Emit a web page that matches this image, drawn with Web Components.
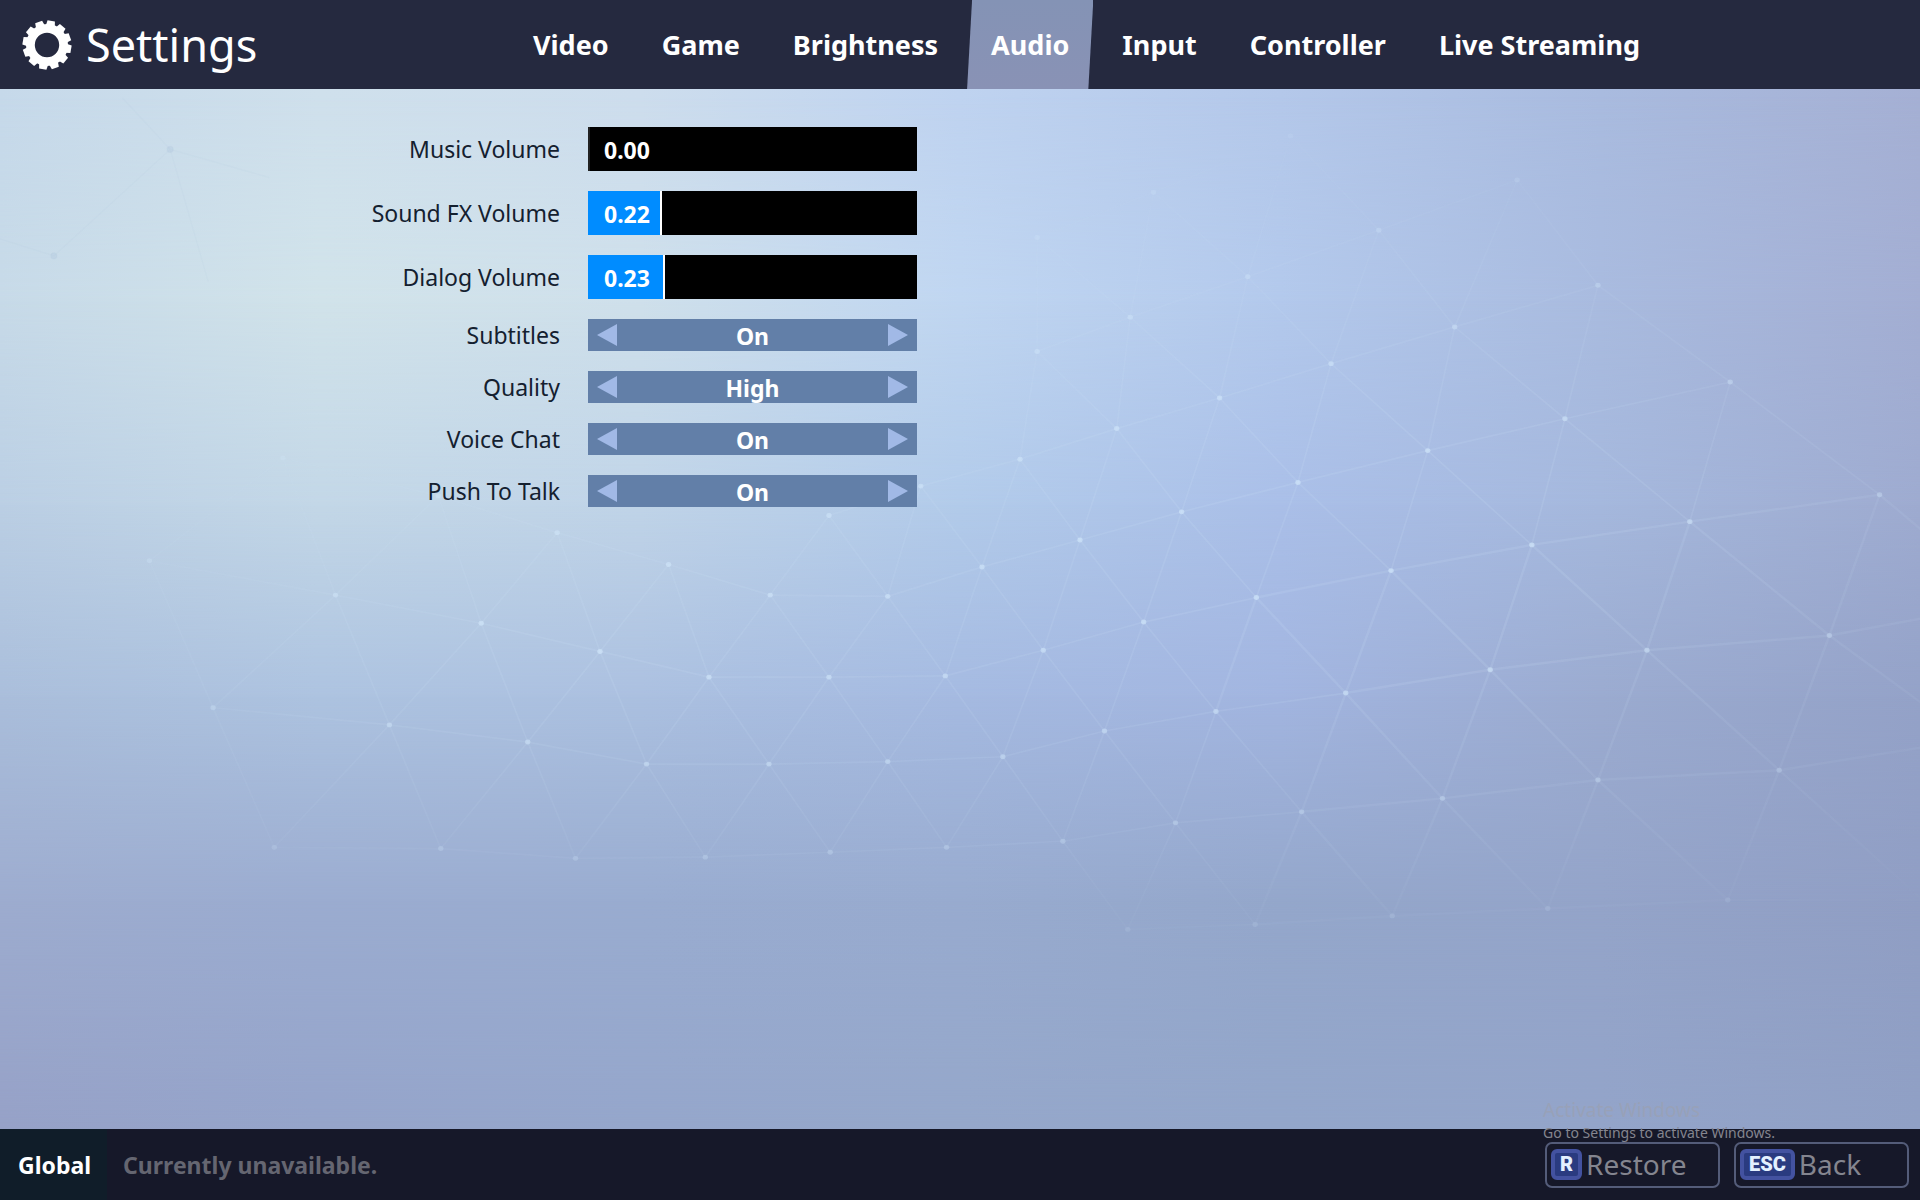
<!DOCTYPE html>
<html lang="en">
<head>
<meta charset="utf-8">
<title>Settings</title>
<style>
    html, body {
        height: 100%;
        margin: 0;
    }

    body {
        font-family: "Noto Sans", "Open Sans", sans-serif;
        color: #fff;
    }
</style>
</head>
<body>

<settings-screen>
    <settings-header slot="header" heading="Settings">
        <settings-tab>Video</settings-tab>
        <settings-tab>Game</settings-tab>
        <settings-tab>Brightness</settings-tab>
        <settings-tab active>Audio</settings-tab>
        <settings-tab>Input</settings-tab>
        <settings-tab>Controller</settings-tab>
        <settings-tab>Live Streaming</settings-tab>
    </settings-header>

    <settings-panel>
        <volume-setting value="0.00">Music Volume</volume-setting>
        <volume-setting value="0.22">Sound FX Volume</volume-setting>
        <volume-setting value="0.23">Dialog Volume</volume-setting>
        <choice-setting options="On,Off" value="On">Subtitles</choice-setting>
        <choice-setting options="Low,High" value="High">Quality</choice-setting>
        <choice-setting options="On,Off" value="On">Voice Chat</choice-setting>
        <choice-setting options="On,Off" value="On">Push To Talk</choice-setting>
    </settings-panel>

    <settings-footer slot="footer">
        <span slot="channel">Global</span>
        <span slot="status">Currently unavailable.</span>
        <key-button key="R">Restore</key-button>
        <key-button key="ESC">Back</key-button>
    </settings-footer>

    <activation-notice slot="notice">
        <span slot="title">Activate Windows</span>
        Go to Settings to activate Windows.
    </activation-notice>
</settings-screen>

<script>
class BaseElement extends HTMLElement {
    constructor(html) {
        super();
        this.attachShadow({ mode: 'open' }).innerHTML = html;
    }

    $(selector) {
        return this.shadowRoot.querySelector(selector);
    }
}


customElements.define('settings-screen', class SettingsScreen extends BaseElement {
    constructor() {
        super(`
<style>
    :host {
        position: relative;
        display: grid;
        grid-template-rows: auto 1fr auto;
        min-height: 100vh;
        isolation: isolate;
    }

    mesh-backdrop {
        position: absolute;
        inset: 0;
        z-index: -1;
    }
</style>
<mesh-backdrop></mesh-backdrop>
<slot name="header"></slot>
<slot></slot>
<slot name="footer"></slot>
<slot name="notice"></slot>
`);
    }
});


// colours from left to right, one line for each stop going down
const shades = [
    [8,   '#c6d9ea', '#cfe0ec', '#cddded', '#bfd3f0', '#b4c8ea', '#a9bbdf', '#a5b0d4'],
    [25,  '#c7dae8', '#d1e3ea', '#cfe0eb', '#c0d6f1', '#b3c9ec', '#a9bbdf', '#a3aed3'],
    [42,  '#bbcfe4', '#c3d7e7', '#c0d4e8', '#b2cbea', '#aabfe8', '#a5b8dd', '#9eabd0'],
    [58,  '#aabedb', '#adc3e0', '#abc0e0', '#a5bae1', '#a2b5e0', '#9babd0', '#94a2c8'],
    [75,  '#9daccf', '#9bacd0', '#99acd0', '#98abcf', '#94a7cb', '#94a4c9', '#909ec4'],
    [94,  '#96a1c7', '#95a4ca', '#95a6cb', '#95a7ca', '#93a6ca', '#93a4c9', '#90a0c5'],
];

// rows of mesh points on a 1568 x 980 canvas
const mesh = [
    { start: 6, lean: 0, points: [[847, 194], [942, 157], [1054, 111]] },
    { start: 6, lean: 0, points: [[847, 287], [923, 259], [1019, 226], [1126, 188], [1239, 147]] },
    { start: 4, lean: 0, points: [[677, 421], [752, 397], [833, 375], [912, 350], [996, 325], [1087, 297], [1188, 267], [1305, 233]] },
    { start: 0, lean: 0, points: [[231, 374], [358, 405], [455, 435], [546, 461], [629, 486], [725, 487], [802, 463], [882, 441], [965, 418], [1060, 394], [1166, 368], [1278, 342], [1413, 312]] },
    { start: 0, lean: -1, points: [[122, 458], [274, 486], [393, 509], [490, 532], [579, 553], [677, 553], [772, 552], [852, 531], [934, 508], [1026, 488], [1136, 466], [1251, 445], [1380, 426], [1535, 404]] },
    { start: 0, lean: -1, points: [[174, 578], [318, 592], [431, 606], [528, 624], [628, 624], [725, 622], [819, 618], [902, 597], [993, 581], [1099, 566], [1217, 547], [1345, 531], [1494, 519], [1640, 492]] },
    { start: 0, lean: -1, points: [[224, 692], [360, 693], [470, 701], [576, 700], [678, 696], [773, 692], [868, 687], [960, 672], [1063, 663], [1178, 652], [1305, 637], [1453, 629], [1610, 604]] },
    { start: 6, lean: 0, points: [[921, 759], [1025, 755], [1137, 748], [1264, 742], [1411, 735], [1570, 735]] },
];

function meshMarkup() {
    let lines = '';
    let dots = '';
    const at = (row, column) => row && row.points[column - row.start];
    const line = (from, to, width) => {
        if(from && to) {
            lines += `<path d="M${from} L${to}" stroke-width="${width}"/>`;
        }
    };

    mesh.forEach((row, r) => {
        row.points.forEach((point, i) => {
            let column = row.start + i;
            let width = r > 3 && point[0] > 1000 ? 2 : 1.4;
            dots += `<ellipse cx="${point[0]}" cy="${point[1]}" rx="2.2" ry="2"/>`;
            line(point, row.points[i + 1], width);
            line(point, at(mesh[r + 1], column + row.lean), width);
            line(point, at(mesh[r + 1], column + row.lean + 1), width);
        });
    });
    return `<g class="lines">${lines}</g><g class="dots">${dots}</g>`;
}

customElements.define('mesh-backdrop', class MeshBackdrop extends BaseElement {
    constructor() {
        super(`
<style>
    :host {
        display: block;
        overflow: hidden;
    }

    .shade, svg {
        position: absolute;
        inset: 0;
        width: 100%;
        height: 100%;
    }

    .mesh {
        -webkit-mask-image: radial-gradient(ellipse 52% 40% at 70% 45%, #000 25%, transparent 100%),
            radial-gradient(ellipse 40% 28% at 30% 54%, #000 10%, transparent 100%);
        mask-image: radial-gradient(ellipse 52% 40% at 70% 45%, #000 25%, transparent 100%),
            radial-gradient(ellipse 40% 28% at 30% 54%, #000 10%, transparent 100%);
    }

    .lines {
        fill: none;
        stroke: #cfe4f8;
        stroke-opacity: 0.15;
    }

    .dots {
        fill: #d3e9fb;
        fill-opacity: 0.6;
    }

    .dim {
        fill: #a9c0da;
        fill-opacity: 0.25;
        stroke: #a9c0da;
        stroke-opacity: 0.08;
    }
</style>
${shades.map(([top, ...colours], i) => {
    // every layer fades in over the one before it
    let mask = i ? `linear-gradient(transparent ${shades[i - 1][0]}%, #000 ${top}%)` : 'none';
    return `<div class="shade" style="background: linear-gradient(90deg, ${colours.join(', ')}); -webkit-mask-image: ${mask}; mask-image: ${mask}"></div>`;
}).join('')}
<svg viewBox="0 0 1568 980" preserveAspectRatio="none" aria-hidden="true">
    <g class="dim">
        <circle cx="139" cy="122" r="2.5"/>
        <circle cx="44" cy="209" r="2.5"/>
        <path d="M139 122 L44 209 L0 195 M139 122 L170 230 M139 122 L100 80 M139 122 L220 145"  fill="none"/>
    </g>
</svg>
<svg class="mesh" viewBox="0 0 1568 980" preserveAspectRatio="none" aria-hidden="true">${meshMarkup()}</svg>
`);
    }
});


customElements.define('gear-icon', class GearIcon extends BaseElement {
    constructor() {
        let teeth = '';
        for(let i = 0; i < 12; i++) {
            teeth += `<path d="M-4.6 -19 L-3.7 -24.4 H3.7 L4.6 -19 Z" transform="rotate(${i * 30 + 10})"/>`;
        }
        super(`
<style>
    :host {
        display: block;
        width: 50px;
        height: 50px;
    }

    svg {
        display: block;
        fill: currentColor;
    }
</style>
<svg viewBox="-25 -25 50 50" aria-hidden="true">
    <circle r="16.6" fill="none" stroke="currentColor" stroke-width="8.8"/>
    ${teeth}
</svg>
`);
    }
});


customElements.define('settings-header', class SettingsHeader extends BaseElement {
    constructor() {
        super(`
<style>
    :host {
        display: block;
        background: #25293f;
    }

    header {
        display: flex;
        height: 89px;
    }

    .brand {
        display: flex;
        flex: none;
        align-items: center;
        gap: 14px;
        box-sizing: border-box;
        width: calc(25% + 29px);
        padding-left: 22px;
    }

    h1 {
        margin: 0;
        font-size: 45px;
        font-weight: 400;
        line-height: 60px;
    }

    nav {
        display: flex;
        gap: 5px;
    }
</style>
<header>
    <div class="brand"><gear-icon></gear-icon><h1></h1></div>
    <nav><slot></slot></nav>
</header>
`);
    }

    connectedCallback() {
        this.$('h1').textContent = this.getAttribute('heading');
    }
});


customElements.define('settings-tab', class SettingsTab extends BaseElement {
    constructor() {
        super(`
<style>
    :host {
        display: flex;
    }

    a {
        display: flex;
        align-items: center;
        padding: 0 24px;
        color: #fff;
        font-size: 27px;
        font-weight: 700;
        line-height: 36px;
        text-decoration: none;
        white-space: nowrap;
    }

    :host([active]) a {
        background: linear-gradient(#8493b5, #8992b5);
        clip-path: polygon(5px 0, 100% 0, calc(100% - 5px) 100%, 0 100%);
    }
</style>
<a href="#"><slot></slot></a>
`);
    }

    connectedCallback() {
        if(this.hasAttribute('active')) {
            this.$('a').setAttribute('aria-current', 'page');
        }
    }
});


customElements.define('settings-panel', class SettingsPanel extends BaseElement {
    constructor() {
        super(`
<style>
    :host {
        display: block;
    }

    main {
        display: flex;
        flex-direction: column;
        gap: 20px;
        box-sizing: border-box;
        width: calc(50% - 43px);
        padding: 38px 0;
    }
</style>
<main><slot></slot></main>
`);
    }
});


const rowStyle = `
    :host {
        display: grid;
        grid-template-columns: 1fr 329px;
        column-gap: 28px;
        align-items: center;
        font-size: 23px;
        line-height: 32px;
    }

    label {
        color: #14202f;
        text-align: right;
    }

    output {
        font-weight: 700;
    }
`;

customElements.define('volume-setting', class VolumeSetting extends BaseElement {
    constructor() {
        super(`
<style>
    ${rowStyle}

    .bar {
        display: grid;
        align-items: center;
        height: 44px;
    }

    input, output {
        grid-area: 1 / 1;
    }

    input {
        -webkit-appearance: none;
        appearance: none;
        width: 100%;
        height: 100%;
        margin: 0;
        background: linear-gradient(90deg, #008cff var(--level), #000 var(--level));
    }

    input::-webkit-slider-thumb {
        -webkit-appearance: none;
        width: 2px;
        height: 44px;
        background: var(--thumb);
    }

    output {
        z-index: 1;
        padding: 2px 0 0 16px;
        pointer-events: none;
    }
</style>
<label for="level"><slot></slot></label>
<div class="bar">
    <input id="level" type="range" min="0" max="1" step="0.01">
    <output for="level"></output>
</div>
`);
    }

    connectedCallback() {
        let input = this.$('input');
        input.value = this.getAttribute('value');
        input.addEventListener('input', () => this.update());
        this.update();
    }

    update() {
        let value = Number(this.$('input').value);
        this.$('output').textContent = value.toFixed(2);
        this.style.setProperty('--level', (value * 100) + '%');
        this.style.setProperty('--thumb', value ? '#fff' : '#222');
    }
});


customElements.define('choice-setting', class ChoiceSetting extends BaseElement {
    constructor() {
        super(`
<style>
    ${rowStyle}

    .bar {
        display: flex;
        align-items: center;
        justify-content: space-between;
        height: 32px;
        background: #627fa8;
    }

    button {
        width: 38px;
        height: 32px;
        padding: 0 9px;
        border: 0;
        background: none;
        cursor: pointer;
    }

    svg {
        display: block;
        width: 20px;
        height: 22px;
        fill: #a1b9e6;
    }

    output {
        padding-top: 2px;
    }
</style>
<label for="choice"><slot></slot></label>
<div class="bar">
    <button type="button" id="previous" aria-label="Previous"><svg viewBox="0 0 20 22"><path d="M0 11 L20 0 V22 Z"/></svg></button>
    <output id="choice"></output>
    <button type="button" id="next" aria-label="Next"><svg viewBox="0 0 20 22"><path d="M20 11 L0 0 V22 Z"/></svg></button>
</div>
`);
    }

    connectedCallback() {
        this.$('output').textContent = this.getAttribute('value');
        this.$('#previous').addEventListener('click', () => this.step(-1));
        this.$('#next').addEventListener('click', () => this.step(1));
    }

    step(offset) {
        let options = this.getAttribute('options').split(',');
        let index = options.indexOf(this.$('output').textContent) + offset;
        this.$('output').textContent = options[(index + options.length) % options.length];
    }
});


customElements.define('settings-footer', class SettingsFooter extends BaseElement {
    constructor() {
        super(`
<style>
    :host {
        display: block;
        background: #161829;
    }

    footer {
        display: flex;
        height: 71px;
        font-size: 23px;
        font-weight: 700;
        line-height: 32px;
    }

    .channel, .status {
        display: flex;
        align-items: center;
    }

    .channel {
        padding: 0 16px 0 18px;
        background: #101d29;
    }

    .status {
        flex: 1;
        padding-left: 16px;
        color: #656671;
    }

    .actions {
        display: flex;
        gap: 14px;
        padding: 13px 11px 0 0;
    }
</style>
<footer>
    <div class="channel"><slot name="channel"></slot></div>
    <div class="status"><slot name="status"></slot></div>
    <div class="actions"><slot></slot></div>
</footer>
`);
    }
});


customElements.define('key-button', class KeyButton extends BaseElement {
    constructor() {
        super(`
<style>
    :host {
        display: block;
    }

    button {
        display: flex;
        align-items: center;
        gap: 4px;
        box-sizing: border-box;
        width: 175px;
        height: 46px;
        padding: 0 4px 2px;
        border: 2px solid #545c79;
        border-radius: 7px;
        background: none;
        color: #84858f;
        font: 400 28px/36px "Noto Sans", "Open Sans", sans-serif;
        cursor: pointer;
    }

    kbd {
        box-sizing: border-box;
        height: 31px;
        padding: 0 5px;
        border: 4px solid #4352a0;
        border-radius: 6px;
        background: #2a3b80;
        color: #e3f0ff;
        font: 900 20px/23px Roboto, "Liberation Sans", sans-serif;
    }
</style>
<button type="button"><kbd></kbd><slot></slot></button>
`);
    }

    connectedCallback() {
        this.$('kbd').textContent = this.getAttribute('key');
    }
});


customElements.define('activation-notice', class ActivationNotice extends BaseElement {
    constructor() {
        super(`
<style>
    :host {
        position: absolute;
        right: 145px;
        bottom: 57px;
        color: #84858f;
        font-size: 14px;
        line-height: 20px;
        pointer-events: none;
    }

    .title {
        color: #98a1b8;
        font-size: 19px;
        line-height: 26px;
    }
</style>
<div class="title"><slot name="title"></slot></div>
<div><slot></slot></div>
`);
    }
});
</script>
</body>
</html>
